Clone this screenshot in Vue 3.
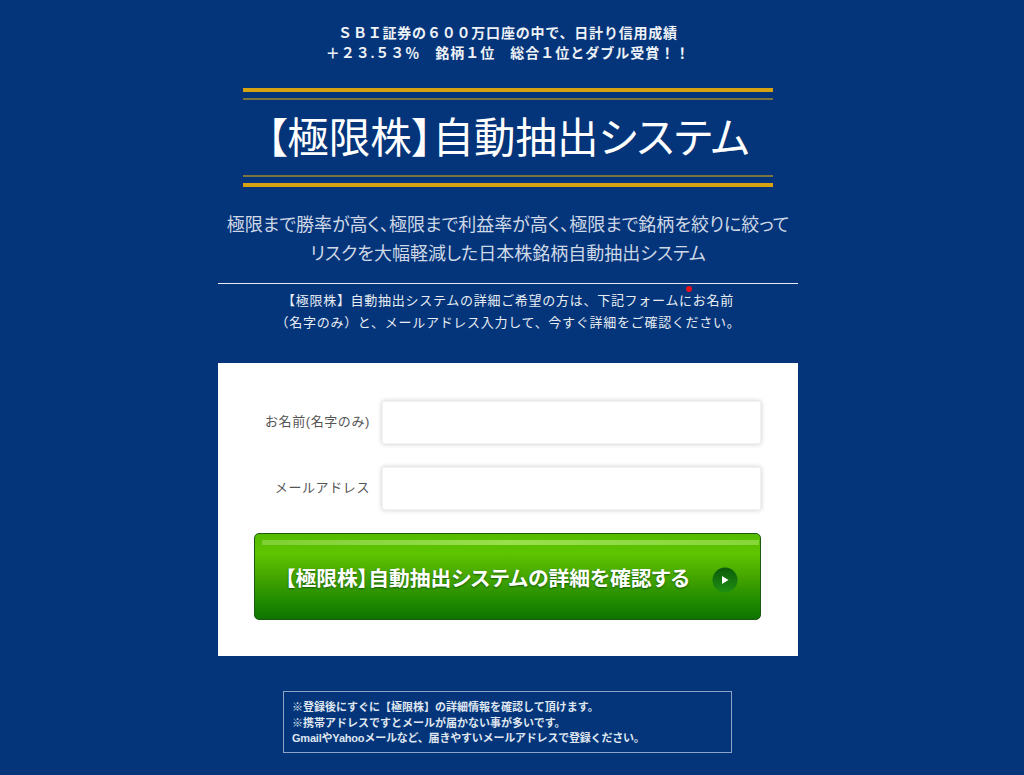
<script setup>
const notes = [
  '※登録後にすぐに【極限株】の詳細情報を確認して頂けます。',
  '※携帯アドレスですとメールが届かない事が多いです。',
  'GmailやYahooメールなど、届きやすいメールアドレスで登録ください。'
];
</script>

<template>
  <div class="page">
    <div class="column">
      <p class="lead">
        <span class="lead-first">ＳＢＩ証券の６００万口座の中で、日計り信用成績</span><br />
        ＋２３.５３％　銘柄１位　総合１位とダブル受賞！！
      </p>

      <div class="banner">
        <div class="rule-thick"></div>
        <div class="rule-thin"></div>
        <h1 class="title">【極限株】自動抽出システム</h1>
        <div class="rule-thin"></div>
        <div class="rule-thick"></div>
      </div>

      <p class="catch">
        極限まで勝率が高く、極限まで利益率が高く、極限まで銘柄を絞りに絞って<br />
        リスクを大幅軽減した日本株銘柄自動抽出システム
      </p>

      <div class="divider"></div>

      <p class="intro">
        <i class="red-dot"></i>
        【極限株】自動抽出システムの詳細ご希望の方は、下記フォームにお名前<br />
        （名字のみ）と、メールアドレス入力して、今すぐ詳細をご確認ください。
      </p>

      <form class="panel" @submit.prevent>
        <div class="field">
          <label class="label">お名前(名字のみ)</label>
          <input class="input" type="text" />
        </div>
        <div class="field">
          <label class="label">メールアドレス</label>
          <input class="input" type="email" />
        </div>
        <button class="submit" type="submit">
          <span class="shine"></span>
          <span class="submit-text">【極限株】自動抽出システムの詳細を確認する</span>
          <svg class="arrow" width="26" height="26" viewBox="0 0 26 26">
            <defs>
              <linearGradient id="arrowBg" x1="0" y1="0" x2="0" y2="1">
                <stop offset="0" stop-color="#0b5a0b" />
                <stop offset="1" stop-color="#1f8f12" />
              </linearGradient>
            </defs>
            <circle cx="13" cy="13" r="12.5" fill="url(#arrowBg)" />
            <path d="M10 9 L16.5 13 L10 17 Z" fill="#fff" />
          </svg>
        </button>
      </form>

      <div class="notes">
        <div v-for="line in notes" :key="line">{{ line }}</div>
      </div>
    </div>
  </div>
</template>

<style scoped>
.page {
  height: 775px;
  overflow: hidden;
  background: #04357a;
  padding-right: 8px;
  box-sizing: border-box;
}
.column {
  width: 580px;
  margin: 0 auto;
  padding-top: 24px;
  font-family: "Liberation Serif", "Noto Sans CJK JP", serif;
  color: #fff;
}
.lead {
  margin: 0;
  font-size: 14px;
  line-height: 20px;
  font-weight: 700;
  letter-spacing: 1px;
  text-align: center;
  color: #eef2f7;
}
.lead-first {
  letter-spacing: 0.8px;
}
.banner {
  width: 530px;
  margin: 24px auto 0;
}
.rule-thick {
  height: 4px;
  background: #d6a312;
}
.rule-thin {
  height: 2px;
  margin: 6px 0;
  background: #7a7440;
}
.title {
  margin: 0;
  height: 63px;
  font-size: 41.5px;
  line-height: 66px;
  font-weight: 400;
  font-feature-settings: "palt";
  text-align: center;
  white-space: nowrap;
  color: #fff;
}
.catch {
  margin: 24px 0 0;
  font-size: 18px;
  line-height: 29px;
  font-feature-settings: "palt";
  text-align: center;
  white-space: nowrap;
  color: #cfd8e6;
}
.divider {
  height: 1px;
  margin-top: 14px;
  background: #e6ebf2;
}
.intro {
  position: relative;
  margin: 6px 0 0;
  font-family: "Liberation Sans", "Noto Sans CJK JP", sans-serif;
  font-size: 13px;
  line-height: 22px;
  letter-spacing: 0.72px;
  text-align: center;
  white-space: nowrap;
  color: #e8edf4;
}
.red-dot {
  position: absolute;
  left: 468px;
  top: -1px;
  width: 6px;
  height: 6px;
  margin-top: -3px;
  border-radius: 50%;
  background: #e8121c;
}
.panel {
  margin-top: 29px;
  height: 293px;
  padding: 38px 37px 0 36px;
  box-sizing: border-box;
  background: #fff;
}
.field {
  display: flex;
  align-items: center;
  justify-content: flex-end;
  gap: 12px;
  margin-bottom: 23px;
}
.label {
  padding-bottom: 4px;
  font-family: "Liberation Sans", "Noto Sans CJK JP", sans-serif;
  font-size: 13px;
  letter-spacing: 0.6px;
  color: #555;
  white-space: nowrap;
}
.input {
  width: 379px;
  height: 43px;
  padding: 0 10px;
  box-sizing: border-box;
  border: 1px solid #f2f2f2;
  border-radius: 2px;
  background: #fff;
  box-shadow: 0 0 5px rgba(0, 0, 0, 0.22);
  outline: none;
}
.submit {
  position: relative;
  display: flex;
  align-items: center;
  width: 507px;
  height: 87px;
  padding: 5px 22px 0 30px;
  box-sizing: border-box;
  border: 1px solid #1c5a10;
  border-radius: 5px;
  background: linear-gradient(#54bb00 0%, #5fc500 22%, #46a600 50%, #1e8a00 80%, #0f7400 100%);
  color: #fff;
  font-family: "Liberation Sans", "Noto Sans CJK JP", sans-serif;
  cursor: pointer;
}
.shine {
  position: absolute;
  left: 7px;
  right: 1px;
  top: 6px;
  height: 5px;
  background: linear-gradient(90deg, #7fd034, #98e04c 50%, #86d63a);
}
.submit-text {
  flex: 1;
  padding-bottom: 4px;
  font-size: 20.8px;
  font-weight: 700;
  font-feature-settings: "palt";
  text-align: left;
  white-space: nowrap;
  text-shadow: 0 1px 2px rgba(0, 60, 0, 0.7);
}
.arrow {
  flex: none;
  margin-top: 2px;
}
.notes {
  width: 449px;
  height: 62px;
  margin: 35px 0 0 65px;
  padding: 8px 8px 0;
  box-sizing: border-box;
  border: 1px solid #8ea4c6;
  font-family: "Liberation Sans", "Noto Sans CJK JP", sans-serif;
  font-size: 11px;
  font-weight: 700;
  line-height: 15.5px;
  color: #dfe6f0;
  white-space: nowrap;
}
.notes div:last-child {
  letter-spacing: -0.2px;
}
</style>

<style>
html,
body {
  margin: 0;
  background: #04357a;
}
</style>
